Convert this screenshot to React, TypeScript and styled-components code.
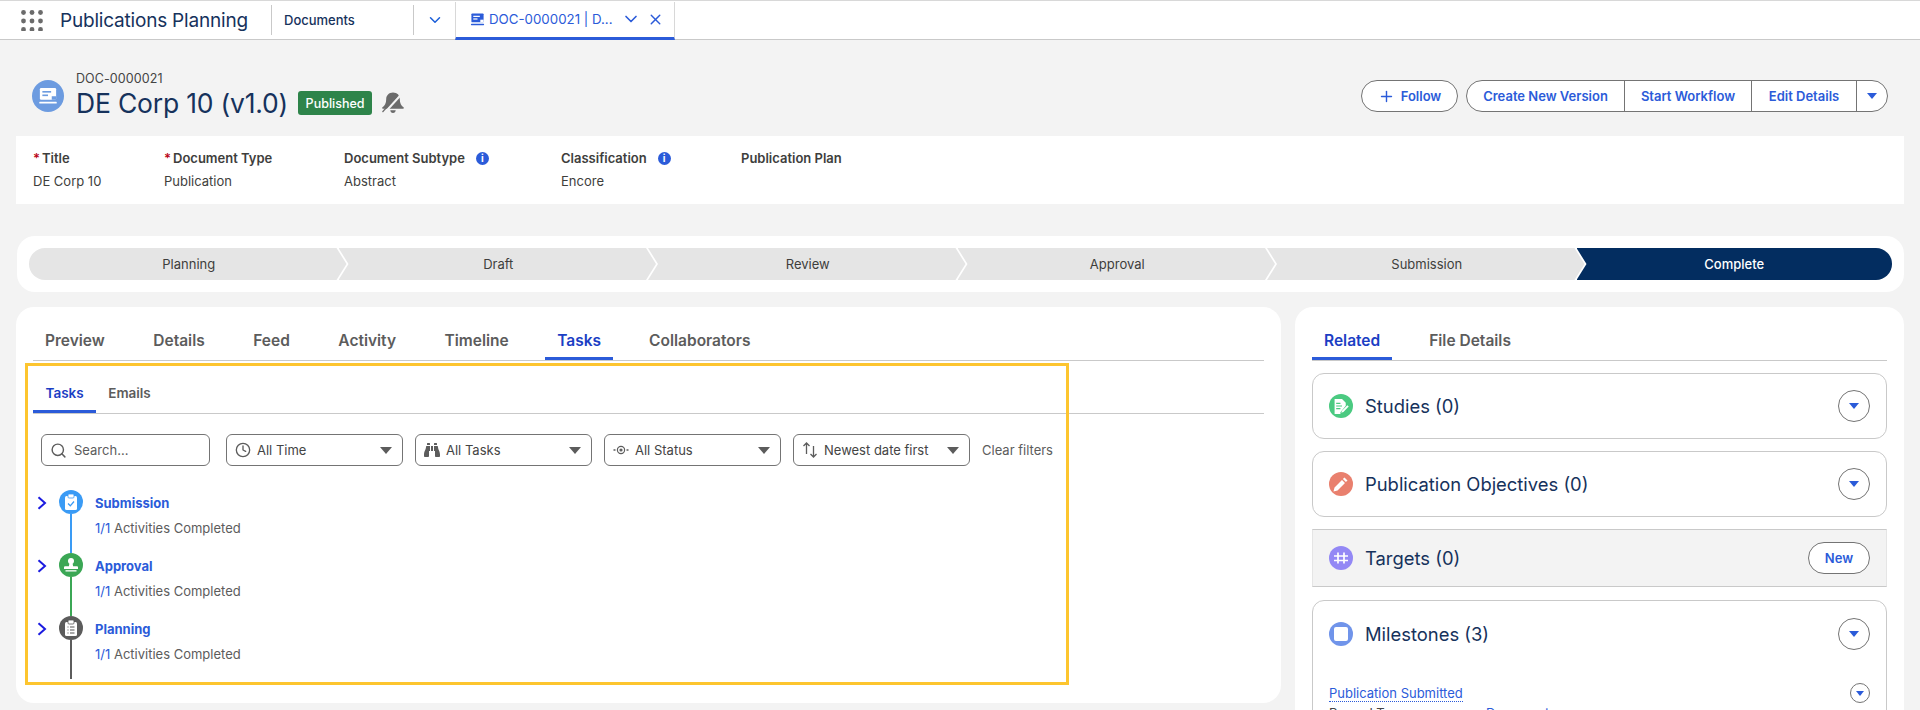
import styled, { createGlobalStyle } from 'styled-components';
import { Search, Clock, ChevronDown, X, Plus } from 'lucide-react';
import { FaBinoculars } from 'react-icons/fa';

const GlobalStyle = createGlobalStyle`
  html, body {
    margin: 0;
    height: 710px;
    overflow: hidden;
    background: #f3f3f3;
  }
  body, input {
    font-family: Inter, "Liberation Sans", sans-serif;
  }
  * { box-sizing: border-box; }
`;

const Page = styled.div`
  width: 1920px;
  height: 710px;
  overflow: hidden;
  position: relative;
`;

/* top navigation */
const TopBar = styled.header`
  height: 40px;
  background: #fff;
  border-top: 1px solid #d8d8d8;
  border-bottom: 1px solid #c9c9c9;
  display: flex;
  align-items: center;
  padding-left: 21px;
`;

const AppName = styled.div`
  font-size: 19px;
  color: #16325c;
  margin-left: 17px;
  width: 211px;
  letter-spacing: -0.2px;
`;

const NavItem = styled.div`
  height: 30px;
  width: 143px;
  border-left: 1px solid #c9c9c9;
  border-right: 1px solid #c9c9c9;
  display: flex;
  align-items: center;
  padding-left: 12px;
  font-size: 13px;
  font-weight: 500;
  color: #16325c;
`;

const NavMore = styled.div`
  width: 41px;
  display: flex;
  justify-content: center;
  color: #1b5fd9;
`;

const OpenTab = styled.div`
  height: 38px;
  width: 220px;
  margin-bottom: -1px;
  display: flex;
  align-items: center;
  padding: 0 0 0 14px;
  color: #2b5bd9;
  font-size: 13.3px;
  border-left: 1px solid #d8d8d8;
  border-right: 1px solid #d8d8d8;
  border-bottom: 3px solid #2b5bd9;
`;

const OpenTabLabel = styled.span`
  margin-left: 4px;
  width: 132px;
  white-space: nowrap;
`;

const CloseIcon = styled(X)`
  margin-left: 6px;
`;

/* record header */
const RecordHeader = styled.div`
  height: 96px;
  display: flex;
  padding: 40px 32px 0;
`;

const RecordIcon = styled.div`
  width: 32px;
  height: 32px;
  border-radius: 50%;
  background: #6c9be0;
  display: flex;
  align-items: center;
  justify-content: center;
  margin-right: 12px;
`;

const RecordTitles = styled.div`
  margin-top: -9px;
`;

const RecordId = styled.div`
  font-size: 12.5px;
  line-height: 16px;
  color: #444;
  letter-spacing: 0.1px;
`;

const RecordTitleRow = styled.div`
  display: flex;
  align-items: center;
  margin-top: -2px;
`;

const RecordTitle = styled.h1`
  margin: 0;
  font-size: 26.5px;
  line-height: 36px;
  font-weight: 400;
  color: #16325c;
  letter-spacing: -0.2px;
`;

const Badge = styled.span`
  margin-left: 10px;
  height: 24px;
  width: 74px;
  border-radius: 3px;
  background: #2e844a;
  color: #fff;
  font-size: 12.5px;
  font-weight: 500;
  display: flex;
  align-items: center;
  justify-content: center;
`;

const BellWrap = styled.div`
  margin-left: 9px;
  display: flex;
`;

const HeaderActions = styled.div`
  margin-left: auto;
  display: flex;
  gap: 8px;
  height: 32px;
`;

const PillButton = styled.button`
  height: 32px;
  width: 97px;
  border: 1px solid #747474;
  border-radius: 16px;
  background: #fff;
  color: #2b5bd9;
  font-family: inherit;
  font-size: 13px;
  font-weight: 600;
  display: flex;
  align-items: center;
  justify-content: center;
  gap: 6px;
  padding: 0;
`;

const ButtonGroup = styled.div`
  display: flex;
  height: 32px;
  border: 1px solid #747474;
  border-radius: 16px;
  background: #fff;
  overflow: hidden;
`;

const GroupButton = styled.div<{ $w: number }>`
  width: ${(p) => p.$w}px;
  display: flex;
  align-items: center;
  justify-content: center;
  color: #2b5bd9;
  font-size: 13px;
  font-weight: 600;
  border-left: 1px solid #747474;
  &:first-child {
    border-left: 0;
  }
`;

const Caret = styled.span<{ $color?: string; $size?: number }>`
  width: 0;
  height: 0;
  display: block;
  flex: none;
  border-left: ${(p) => p.$size ?? 5}px solid transparent;
  border-right: ${(p) => p.$size ?? 5}px solid transparent;
  border-top: ${(p) => (p.$size ?? 5) + 1}px solid ${(p) => p.$color ?? '#2b5bd9'};
`;

/* highlights */
const Highlights = styled.section`
  margin: 0 16px;
  height: 68px;
  background: #fff;
  display: flex;
  padding: 14px 0 0 17px;
`;

const Field = styled.div<{ $w: number }>`
  width: ${(p) => p.$w}px;
`;

const FieldLabel = styled.div`
  display: flex;
  align-items: center;
  font-size: 13px;
  line-height: 16px;
  font-weight: 600;
  color: #3e3e3c;
`;

const Req = styled.span`
  color: #ba0517;
  margin-right: 2px;
  font-size: 13px;
`;

const InfoDot = styled.span`
  margin-left: 11px;
  width: 13px;
  height: 13px;
  border-radius: 50%;
  background: #2b5bd9;
  color: #fff;
  font-size: 10px;
  font-weight: 700;
  line-height: 13px;
  text-align: center;
`;

const FieldValue = styled.div`
  margin-top: 7px;
  font-size: 13px;
  line-height: 16px;
  color: #3e3e3c;
`;

/* path */
const PathCard = styled.section`
  margin: 32px 16px 0 17px;
  height: 56px;
  border-radius: 18px;
  background: #fff;
  padding: 12px;
  display: flex;
`;

const Step = styled.div<{ $active?: boolean; $first?: boolean; $last?: boolean }>`
  flex: 1;
  height: 32px;
  margin-left: ${(p) => (p.$first ? 0 : -8)}px;
  padding-left: ${(p) => (p.$last ? 0 : 2)}px;
  background: ${(p) => (p.$active ? '#032d60' : '#e5e5e5')};
  color: ${(p) => (p.$active ? '#fff' : '#3e3e3c')};
  font-size: 13px;
  font-weight: ${(p) => (p.$active ? 500 : 400)};
  display: flex;
  align-items: center;
  justify-content: center;
  border-radius: ${(p) => (p.$first ? '16px 0 0 16px' : p.$last ? '0 16px 16px 0' : '0')};
  clip-path: polygon(
    0 0,
    ${(p) => (p.$last ? '100%' : 'calc(100% - 10px)')} 0,
    100% 50%,
    ${(p) => (p.$last ? '100%' : 'calc(100% - 10px)')} 100%,
    0 100%,
    ${(p) => (p.$first ? '0' : '10px')} 50%
  );
`;

/* main columns */
const Columns = styled.div`
  margin: 15px 16px 0;
  display: grid;
  grid-template-columns: 1265px 609px;
  gap: 14px;
  align-items: start;
`;

const Card = styled.section`
  background: #fff;
  border-radius: 18px;
`;

const LeftCard = styled(Card)`
  height: 396px;
  padding: 0 17px;
`;

const RightCard = styled(Card)`
  height: 500px;
  padding: 0 17px;
`;

const TabRow = styled.div`
  height: 54px;
  display: flex;
  border-bottom: 1px solid #c9c9c9;
`;

const Tab = styled.div<{ $active?: boolean; $gap: number }>`
  height: 53px;
  padding: 16px 12px 0;
  margin-right: ${(p) => p.$gap}px;
  display: flex;
  align-items: center;
  font-size: 15.5px;
  font-weight: 600;
  color: ${(p) => (p.$active ? '#1b3ec4' : '#5c5c5c')};
  border-bottom: 3px solid ${(p) => (p.$active ? '#2b5bd9' : 'transparent')};
`;

const SubTabRow = styled.div`
  height: 53px;
  display: flex;
  border-bottom: 1px solid #c9c9c9;
`;

const SubTab = styled.div<{ $active?: boolean }>`
  height: 52px;
  padding: 14px 12px 0 12.5px;
  display: flex;
  align-items: center;
  font-size: 13.5px;
  font-weight: 600;
  color: ${(p) => (p.$active ? '#1b3ec4' : '#5c5c5c')};
  border-bottom: 3px solid ${(p) => (p.$active ? '#2b5bd9' : 'transparent')};
`;

const Filters = styled.div`
  margin: 20px 0 0 8px;
  display: flex;
  align-items: center;
  gap: 12px;
`;

const SearchBox = styled.label`
  width: 169px;
  height: 32px;
  margin-right: 4px;
  border: 1px solid #747474;
  border-radius: 6px;
  display: flex;
  align-items: center;
  padding-left: 8px;
  gap: 7px;
  color: #5c5c5c;
`;

const SearchInput = styled.input`
  border: 0;
  outline: 0;
  padding: 0;
  width: 120px;
  font-size: 13px;
  color: #444;
  &::placeholder {
    color: #5c5c5c;
    opacity: 1;
  }
`;

const Dropdown = styled.div`
  width: 177px;
  height: 32px;
  border: 1px solid #747474;
  border-radius: 6px;
  display: flex;
  align-items: center;
  padding: 0 10px 0 8px;
  gap: 6px;
  font-size: 13px;
  color: #444;
  white-space: nowrap;
`;

const DropdownLabel = styled.span`
  flex: 1;
`;

const ClearLink = styled.span`
  font-size: 13px;
  color: #5c5c5c;
  white-space: nowrap;
`;

const Timeline = styled.div`
  margin: 24px 0 0 4px;
`;

const TimelineItem = styled.div`
  height: 63px;
  display: flex;
`;

const Expand = styled.div`
  width: 22px;
  height: 26px;
  display: flex;
  align-items: center;
`;

const Rail = styled.div`
  width: 24px;
  display: flex;
  flex-direction: column;
  align-items: center;
`;

const RailDot = styled.div<{ $color: string }>`
  width: 24px;
  height: 24px;
  flex: none;
  border-radius: 50%;
  background: ${(p) => p.$color};
  display: flex;
  align-items: center;
  justify-content: center;
`;

const RailLine = styled.div<{ $color: string }>`
  width: 2px;
  flex: 1;
  background: ${(p) => p.$color};
`;

const TimelineBody = styled.div`
  margin-left: 12px;
  padding-top: 3px;
`;

const TimelineTitle = styled.div`
  font-size: 13px;
  line-height: 20px;
  font-weight: 700;
  color: #2b5bd9;
`;

const TimelineMeta = styled.div`
  margin-top: 5px;
  font-size: 13px;
  line-height: 20px;
  color: #5c5c5c;
`;

const Count = styled.span`
  color: #2b5bd9;
`;

/* yellow annotation drawn over the screenshot */
const Callout = styled.div`
  position: absolute;
  left: 25px;
  top: 363px;
  width: 1044px;
  height: 322px;
  border: 3px solid #fdc52f;
  pointer-events: none;
`;

/* related list */
const RelatedList = styled.div<{ $flat?: boolean; $h: number; $top: number }>`
  margin-top: ${(p) => p.$top}px;
  height: ${(p) => p.$h}px;
  border: 1px solid #c9c9c9;
  border-left-color: ${(p) => (p.$flat ? '#e5e5e5' : '#c9c9c9')};
  border-right-color: ${(p) => (p.$flat ? '#e5e5e5' : '#c9c9c9')};
  border-radius: ${(p) => (p.$flat ? '0' : '12px')};
  background: ${(p) => (p.$flat ? '#f3f3f3' : '#fff')};
  padding: 0 16px;
  overflow: hidden;
`;

const RelatedHead = styled.div<{ $h: number }>`
  height: ${(p) => p.$h}px;
  display: flex;
  align-items: center;
`;

const RelatedIcon = styled.div<{ $color: string }>`
  width: 24px;
  height: 24px;
  border-radius: 50%;
  background: ${(p) => p.$color};
  display: flex;
  align-items: center;
  justify-content: center;
  margin-right: 12px;
`;

const RelatedTitle = styled.div`
  flex: 1;
  font-size: 18.4px;
  color: #16325c;
`;

const RoundButton = styled.div<{ $size: number }>`
  width: ${(p) => p.$size}px;
  height: ${(p) => p.$size}px;
  border: 1px solid #747474;
  border-radius: 50%;
  background: #fff;
  display: flex;
  align-items: center;
  justify-content: center;
`;

const NewButton = styled(PillButton)`
  width: 62px;
`;

const MilestoneRow = styled.div`
  margin-top: 16px;
  height: 20px;
  display: flex;
  align-items: center;
  justify-content: space-between;
`;

const MilestoneLink = styled.span`
  font-size: 13px;
  color: #2b5bd9;
  border-bottom: 1px dotted #2b5bd9;
`;

const MilestoneMeta = styled.div`
  margin-top: 2px;
  display: flex;
  font-size: 13px;
  line-height: 16px;
  color: #444;
`;

const MetaLabel = styled.span`
  width: 157px;
`;

const MetaLink = styled.span`
  color: #2b5bd9;
`;

const RelatedGap = styled.div`
  margin-top: 13px;
`;

const AppGrid = () => (
  <svg width="22" height="21" viewBox="0 0 22 21" fill="#6b6b6b">
    {[2.5, 11, 19.5].map((cy) =>
      [2.5, 11, 19.5].map((cx) => <circle key={`${cx}-${cy}`} cx={cx} cy={cy} r="2.4" />)
    )}
  </svg>
);

const DocGlyph = ({ size, fill, line }: { size: number; fill: string; line: string }) => (
  <svg width={size} height={size} viewBox="0 0 16 16">
    <rect x="1.5" y="1.5" width="13" height="9.5" rx="1" fill={fill} />
    <rect x="3.5" y="4" width="7" height="1.3" fill={line} />
    <rect x="3.5" y="6.8" width="4.5" height="1.3" fill={line} />
    <rect x="11" y="8.2" width="3.5" height="2.8" fill={line} />
    <rect x="1" y="12.6" width="14" height="1.4" rx=".5" fill={fill} />
  </svg>
);

const BellOff = () => (
  <svg width="24" height="24" viewBox="0 0 24 24" fill="#6b6b6b">
    <path d="M12 1.500c-4 0-6.800 2.800-6.800 6.800 0 4-1.500 6.400-3.700 8-.7.500-.4 1.500.5 1.500h20c.9 0 1.200-1 .5-1.500-2.200-1.600-3.700-4-3.700-8 0-4-2.800-6.800-6.800-6.800z" />
    <path d="M9.300 19.300h5.400c0 1.500-1.200 2.700-2.700 2.700s-2.700-1.200-2.700-2.700z" />
    <path d="M3 22.500L22 1.500" stroke="#f3f3f3" strokeWidth="2" />
    <path d="M1.500 21L17 3.500" stroke="#6b6b6b" strokeWidth="1.200" />
  </svg>
);

const RowChevron = () => (
  <svg width="10" height="14" viewBox="0 0 10 14" fill="none" stroke="#1b1be0" strokeWidth="2">
    <path d="M1.500 1.200L8 7l-6.500 5.800" />
  </svg>
);

const StatusGlyph = () => (
  <svg width="16" height="16" viewBox="0 0 16 16" fill="none" stroke="#5c5c5c" strokeWidth="1.200">
    <circle cx="8" cy="8" r="3.600" />
    <circle cx="8" cy="8" r="1" fill="#5c5c5c" />
    <path d="M.5 8h2M13.500 8h2" strokeWidth="1.400" />
  </svg>
);

const SortGlyph = () => (
  <svg width="16" height="18" viewBox="0 0 16 18" fill="none" stroke="#5c5c5c" strokeWidth="1.300">
    <path d="M4.500 13V2M1.500 5l3-3 3 3" />
    <path d="M11.500 5v11M8.500 13l3 3 3-3" />
  </svg>
);

const ClipCheck = () => (
  <svg width="16" height="18" viewBox="0 0 16 18">
    <rect x="2" y="3" width="12" height="14" rx="1.500" fill="#fff" />
    <rect x="5" y="1" width="6" height="4" rx="1" fill="#fff" stroke="#3a9bf5" strokeWidth=".8" />
    <path d="M5 10.500l2.300 2.300L11 8.500" fill="none" stroke="#3a9bf5" strokeWidth="1.300" />
  </svg>
);

const StampGlyph = () => (
  <svg width="16" height="16" viewBox="0 0 16 16" fill="#fff">
    <circle cx="8" cy="4" r="3" />
    <path d="M6.500 6h3l.6 3.200H14a1 1 0 011 1V12H1v-1.800a1 1 0 011-1h3.900z" />
    <rect x="2.500" y="13.200" width="11" height="1.300" />
  </svg>
);

const ClipList = () => (
  <svg width="16" height="18" viewBox="0 0 16 18">
    <rect x="2" y="3" width="12" height="14" rx="1.500" fill="#fff" />
    <rect x="5" y="1" width="6" height="4" rx="1" fill="#fff" stroke="#555" strokeWidth=".8" />
    <path d="M4.500 8h1M7 8h4.500M4.500 11h1M7 11h4.500M4.500 14h1M7 14h4.500" stroke="#555" strokeWidth="1.200" />
  </svg>
);

const StudyGlyph = () => (
  <svg width="17" height="17" viewBox="0 0 16 16" fill="#fff">
    <path d="M1.500 1h7l3.500 3.500v2.800L7 13.500v1.500H1.500z" />
    <path d="M3 5h4M3 7.500h5.500M3 10h4" stroke="#4bca81" strokeWidth="1.100" />
    <path d="M13.500 6.800l1.300 1.200-5 5.200-2 .7.600-1.900z" />
  </svg>
);

const PencilGlyph = () => (
  <svg width="16" height="16" viewBox="0 0 16 16" fill="#fff">
    <path d="M11.500 1.500l3 3-1.600 1.600-3-3zM9 4l3 3-7.500 7.500-4 1 1-4z" />
  </svg>
);

const BridgeGlyph = () => (
  <svg width="16" height="16" viewBox="0 0 16 16" fill="none" stroke="#fff" strokeWidth="1.700">
    <path d="M1 6h14M1 10.500h14M5 2.500v11M11 2.500v11" />
  </svg>
);

const SquareGlyph = () => (
  <svg width="16" height="16" viewBox="0 0 16 16">
    <rect x="1" y="1" width="14" height="14" rx="2" fill="#fff" />
  </svg>
);

const timelineItems = [
  { title: 'Submission', color: '#3a9bf5', icon: <ClipCheck /> },
  { title: 'Approval', color: '#3ba755', icon: <StampGlyph /> },
  { title: 'Planning', color: '#5c5c5c', icon: <ClipList /> },
];

const App = () => {
  return (
    <Page>
      <GlobalStyle />
      <TopBar>
        <AppGrid />
        <AppName>Publications Planning</AppName>
        <NavItem>Documents</NavItem>
        <NavMore>
          <ChevronDown size={18} />
        </NavMore>
        <OpenTab>
          <DocGlyph size={15} fill="#2b5bd9" line="#fff" />
          <OpenTabLabel>DOC-0000021 | D...</OpenTabLabel>
          <ChevronDown size={20} />
          <CloseIcon size={17} />
        </OpenTab>
      </TopBar>

      <RecordHeader>
        <RecordIcon>
          <DocGlyph size={20} fill="#fff" line="#6c9be0" />
        </RecordIcon>
        <RecordTitles>
          <RecordId>DOC-0000021</RecordId>
          <RecordTitleRow>
            <RecordTitle>DE Corp 10 (v1.0)</RecordTitle>
            <Badge>Published</Badge>
            <BellWrap>
              <BellOff />
            </BellWrap>
          </RecordTitleRow>
        </RecordTitles>
        <HeaderActions>
          <PillButton>
            <Plus size={17} />
            Follow
          </PillButton>
          <ButtonGroup>
            <GroupButton $w={157}>Create New Version</GroupButton>
            <GroupButton $w={127}>Start Workflow</GroupButton>
            <GroupButton $w={105}>Edit Details</GroupButton>
            <GroupButton $w={31}>
              <Caret />
            </GroupButton>
          </ButtonGroup>
        </HeaderActions>
      </RecordHeader>

      <Highlights>
        <Field $w={131}>
          <FieldLabel>
            <Req>*</Req>Title
          </FieldLabel>
          <FieldValue>DE Corp 10</FieldValue>
        </Field>
        <Field $w={180}>
          <FieldLabel>
            <Req>*</Req>Document Type
          </FieldLabel>
          <FieldValue>Publication</FieldValue>
        </Field>
        <Field $w={217}>
          <FieldLabel>
            Document Subtype<InfoDot>i</InfoDot>
          </FieldLabel>
          <FieldValue>Abstract</FieldValue>
        </Field>
        <Field $w={180}>
          <FieldLabel>
            Classification<InfoDot>i</InfoDot>
          </FieldLabel>
          <FieldValue>Encore</FieldValue>
        </Field>
        <Field $w={200}>
          <FieldLabel>Publication Plan</FieldLabel>
        </Field>
      </Highlights>

      <PathCard>
        <Step $first>Planning</Step>
        <Step>Draft</Step>
        <Step>Review</Step>
        <Step>Approval</Step>
        <Step>Submission</Step>
        <Step $active $last>
          Complete
        </Step>
      </PathCard>

      <Columns>
        <LeftCard>
          <TabRow>
            <Tab $gap={24.5}>Preview</Tab>
            <Tab $gap={24.5}>Details</Tab>
            <Tab $gap={24.5}>Feed</Tab>
            <Tab $gap={24.5}>Activity</Tab>
            <Tab $gap={24.5}>Timeline</Tab>
            <Tab $gap={24} $active>
              Tasks
            </Tab>
            <Tab $gap={0}>Collaborators</Tab>
          </TabRow>
          <SubTabRow>
            <SubTab $active>Tasks</SubTab>
            <SubTab>Emails</SubTab>
          </SubTabRow>
          <Filters>
            <SearchBox>
              <Search size={17} />
              <SearchInput placeholder="Search..." />
            </SearchBox>
            <Dropdown>
              <Clock size={16} color="#5c5c5c" />
              <DropdownLabel>All Time</DropdownLabel>
              <Caret $color="#5c5c5c" $size={6} />
            </Dropdown>
            <Dropdown>
              <FaBinoculars size={16} color="#5c5c5c" />
              <DropdownLabel>All Tasks</DropdownLabel>
              <Caret $color="#5c5c5c" $size={6} />
            </Dropdown>
            <Dropdown>
              <StatusGlyph />
              <DropdownLabel>All Status</DropdownLabel>
              <Caret $color="#5c5c5c" $size={6} />
            </Dropdown>
            <Dropdown>
              <SortGlyph />
              <DropdownLabel>Newest date first</DropdownLabel>
              <Caret $color="#5c5c5c" $size={6} />
            </Dropdown>
            <ClearLink>Clear filters</ClearLink>
          </Filters>
          <Timeline>
            {timelineItems.map((item) => (
              <TimelineItem key={item.title}>
                <Expand>
                  <RowChevron />
                </Expand>
                <Rail>
                  <RailDot $color={item.color}>{item.icon}</RailDot>
                  <RailLine $color={item.color} />
                </Rail>
                <TimelineBody>
                  <TimelineTitle>{item.title}</TimelineTitle>
                  <TimelineMeta>
                    <Count>1/1</Count> Activities Completed
                  </TimelineMeta>
                </TimelineBody>
              </TimelineItem>
            ))}
          </Timeline>
        </LeftCard>

        <RightCard>
          <TabRow>
            <Tab $gap={25} $active>
              Related
            </Tab>
            <Tab $gap={0}>File Details</Tab>
          </TabRow>
          <RelatedList $h={66} $top={12}>
            <RelatedHead $h={64}>
              <RelatedIcon $color="#4bca81">
                <StudyGlyph />
              </RelatedIcon>
              <RelatedTitle>Studies (0)</RelatedTitle>
              <RoundButton $size={32}>
                <Caret $size={5} />
              </RoundButton>
            </RelatedHead>
          </RelatedList>
          <RelatedList $h={66} $top={12}>
            <RelatedHead $h={64}>
              <RelatedIcon $color="#e9806e">
                <PencilGlyph />
              </RelatedIcon>
              <RelatedTitle>Publication Objectives (0)</RelatedTitle>
              <RoundButton $size={32}>
                <Caret $size={5} />
              </RoundButton>
            </RelatedHead>
          </RelatedList>
          <RelatedList $h={58} $top={12} $flat>
            <RelatedHead $h={56}>
              <RelatedIcon $color="#9388f5">
                <BridgeGlyph />
              </RelatedIcon>
              <RelatedTitle>Targets (0)</RelatedTitle>
              <NewButton>New</NewButton>
            </RelatedHead>
          </RelatedList>
          <RelatedGap />
          <RelatedList $h={140} $top={0}>
            <RelatedHead $h={66}>
              <RelatedIcon $color="#7094ea">
                <SquareGlyph />
              </RelatedIcon>
              <RelatedTitle>Milestones (3)</RelatedTitle>
              <RoundButton $size={32}>
                <Caret $size={5} />
              </RoundButton>
            </RelatedHead>
            <MilestoneRow>
              <MilestoneLink>Publication Submitted</MilestoneLink>
              <RoundButton $size={20}>
                <Caret $size={4} />
              </RoundButton>
            </MilestoneRow>
            <MilestoneMeta>
              <MetaLabel>Record Type</MetaLabel>
              <MetaLink>Document</MetaLink>
            </MilestoneMeta>
          </RelatedList>
        </RightCard>
      </Columns>
      <Callout />
    </Page>
  );
};

export default App;
